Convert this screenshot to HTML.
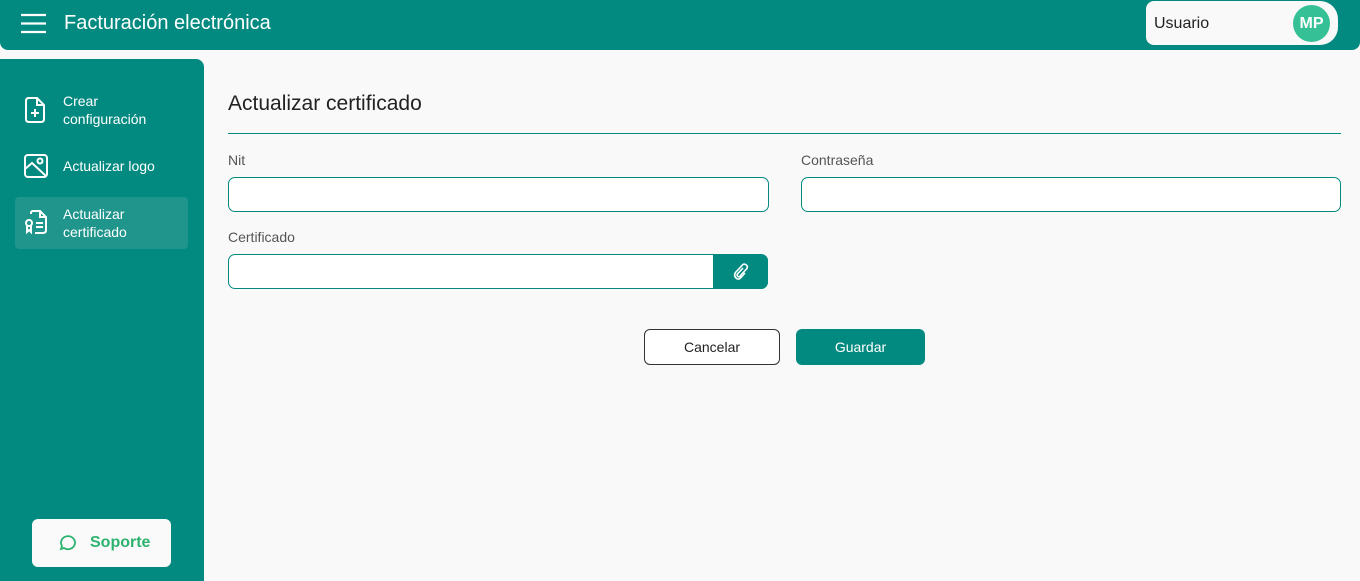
<!DOCTYPE html>
<html><head><meta charset="utf-8"><style>
*{box-sizing:border-box;margin:0;padding:0}
html,body{width:1360px;height:581px;overflow:hidden}
body{background:#f9f9f9;font-family:"Liberation Sans",Roboto,sans-serif;position:relative}
.hdr{position:absolute;left:0;top:0;width:1360px;height:50px;background:#038a80;border-radius:0 0 8px 8px}
.title{position:absolute;left:64px;top:12px;color:#fff;font-size:20px}
.user{position:absolute;left:1146px;top:1px;width:192px;height:44px;background:#f9f9f9;border-radius:8px 18px 18px 8px}
.user span{position:absolute;left:8px;top:14px;font-size:16px;color:#222}
.av{position:absolute;left:147px;top:4px;width:37px;height:37px;border-radius:50%;background:#36c095;color:#fff;font-weight:bold;font-size:16px;text-align:center;line-height:37px}
.side{position:absolute;left:0;top:59px;width:204px;height:522px;background:#038a80;border-radius:0 8px 0 0}
.item{position:absolute;left:15px;width:173px;color:#fff;font-size:14px;line-height:18px}
.item svg{position:absolute;left:8px}
.item div{position:absolute;left:48px}
.sup{position:absolute;left:32px;top:460px;width:139px;height:48px;background:#fafafa;border-radius:6px;color:#2db36f;font-weight:bold;font-size:16px}
h1{position:absolute;left:228px;top:92px;font-size:21px;font-weight:normal;color:#222}
.line{position:absolute;left:228px;top:133px;width:1113px;height:1px;background:#038a80}
.lbl{position:absolute;font-size:14px;color:#555}
.inp{position:absolute;height:35px;background:#fff;border:1px solid #038a80;border-radius:7px}
.btn{position:absolute;top:329px;height:36px;border-radius:6px;font-size:14px;text-align:center;line-height:34px}
</style></head><body>
<div class="hdr">
<svg style="position:absolute;left:20px;top:13px" width="27" height="21"><path d="M1 2H26M1 10.5H26M1 19H26" stroke="#fff" stroke-width="2.2"/></svg>
<div class="title">Facturación electrónica</div>
<div class="user"><span>Usuario</span><div class="av">MP</div></div>
</div>
<div class="side">
<div class="item" style="top:33px;height:36px"><svg style="top:4px" width="24" height="28" viewBox="0 0 24 28" fill="none" stroke="#fff" stroke-width="2"><path d="M4 2H14L21 9V23Q21 26 18 26H6Q3 26 3 23V5Q3 2 6 2ZM14 2V9H21M12 13V21M8 17H16"/></svg><div>Crear<br>configuración</div></div>
<div class="item" style="top:98px;height:20px"><svg style="top:-4px" width="26" height="26" viewBox="0 0 26 26" fill="none" stroke="#fff" stroke-width="2"><rect x="2" y="2" width="22" height="22" rx="3"/><circle cx="17" cy="8" r="2.5"/><path d="M2 16L9 10L23 23"/></svg><div>Actualizar logo</div></div>
<div class="item" style="top:138px;height:52px;background:#1f958c;border-radius:4px"><svg style="top:12px" width="26" height="26" viewBox="0 0 26 26" fill="none" stroke="#fff" stroke-width="2"><path d="M8 5V4Q8 2 10 2H17L23 8V21Q23 24 20 24H12M17 2V8H23M13 14H20M13 18H20"/><circle cx="6" cy="14" r="3"/><path d="M4 17V23L6 21L8 23V17"/></svg><div style="top:8px">Actualizar<br>certificado</div></div>
<div class="sup"><svg style="position:absolute;left:26px;top:15px" width="18" height="18" viewBox="0 0 18 18" fill="none" stroke="#2db36f" stroke-width="1.8"><path d="M3 15L4 12A7 6.5 0 1 1 6 14Z"/></svg><span style="position:absolute;left:58px;top:15px">Soporte</span></div>
</div>
<h1>Actualizar certificado</h1>
<div class="line"></div>
<div class="lbl" style="left:228px;top:152px">Nit</div>
<div class="inp" style="left:228px;top:177px;width:541px"></div>
<div class="lbl" style="left:801px;top:152px">Contraseña</div>
<div class="inp" style="left:801px;top:177px;width:540px"></div>
<div class="lbl" style="left:228px;top:229px">Certificado</div>
<div class="inp" style="left:228px;top:254px;width:540px"></div>
<div style="position:absolute;left:713px;top:254px;width:55px;height:35px;background:#038a80;border-radius:0 7px 7px 0"><svg style="position:absolute;left:20px;top:9px" width="16" height="17" viewBox="0 0 16 17" fill="none" stroke="#fff" stroke-width="1.6"><path d="M10 5L4.5 11Q3.5 12.5 5 13.5T7.5 12.5L13.5 6Q15.5 3.5 13 1.8T9 2.5L2.5 9.5Q0.5 12.5 3 15T8 14.5L12 10"/></svg></div>
<div class="btn" style="left:644px;width:136px;border:1px solid #333;background:#fff;color:#222">Cancelar</div>
<div class="btn" style="left:796px;width:129px;background:#038a80;color:#fff;line-height:36px">Guardar</div>
</body></html>
